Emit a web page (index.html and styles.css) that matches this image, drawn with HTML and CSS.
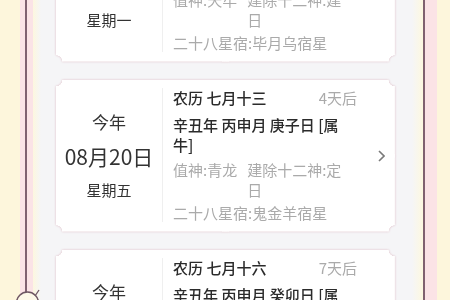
FILE: index.html
```html
<!DOCTYPE html>
<html lang="zh-CN">
<head>
<meta charset="utf-8">
<link rel="stylesheet" href="styles.css">
</head>
<body>
<div class="frame">
  <div class="rail">
    <div class="paper">
      <div class="list">
        <div class="card">
          <div class="side">
            <div class="year">今天</div>
            <div class="date">08月16日</div>
            <div class="week">星期一</div>
          </div>
          <div class="divider"></div>
          <div class="info">
            <div class="head"><span>农历 七月初九</span><span class="after">今天</span></div>
            <div class="gz">辛丑年 丙申月 丙申日 [属牛]</div>
            <div class="gods"><span>值神:天牢</span><span>建除十二神:建日</span></div>
            <div class="xiu">二十八星宿:毕月乌宿星</div>
          </div>
          <div class="arrow"><svg width="7" height="12" viewBox="0 0 7 12"><polyline points="1,1 6,6 1,11" fill="none" stroke="#7a7a7a" stroke-width="1.6"/></svg></div>
        </div>
        <div class="card">
          <div class="side">
            <div class="year">今年</div>
            <div class="date">08月20日</div>
            <div class="week">星期五</div>
          </div>
          <div class="divider"></div>
          <div class="info">
            <div class="head"><span>农历 七月十三</span><span class="after">4天后</span></div>
            <div class="gz">辛丑年 丙申月 庚子日 [属牛]</div>
            <div class="gods"><span>值神:青龙</span><span>建除十二神:定日</span></div>
            <div class="xiu">二十八星宿:鬼金羊宿星</div>
          </div>
          <div class="arrow"><svg width="7" height="12" viewBox="0 0 7 12"><polyline points="1,1 6,6 1,11" fill="none" stroke="#7a7a7a" stroke-width="1.6"/></svg></div>
        </div>
        <div class="card">
          <div class="side">
            <div class="year">今年</div>
            <div class="date">08月23日</div>
            <div class="week">星期一</div>
          </div>
          <div class="divider"></div>
          <div class="info">
            <div class="head"><span>农历 七月十六</span><span class="after">7天后</span></div>
            <div class="gz">辛丑年 丙申月 癸卯日 [属牛]</div>
            <div class="gods"><span>值神:玉堂</span><span>建除十二神:破日</span></div>
            <div class="xiu">二十八星宿:张月鹿宿星</div>
          </div>
          <div class="arrow"><svg width="7" height="12" viewBox="0 0 7 12"><polyline points="1,1 6,6 1,11" fill="none" stroke="#7a7a7a" stroke-width="1.6"/></svg></div>
        </div>
      </div>
    </div>
  </div>
</div>
<svg class="charm" width="34" height="20" viewBox="0 0 34 20">
  <circle cx="15.5" cy="15" r="11" fill="#fdf8e8" stroke="#6e5663" stroke-width="1.5"/>
  <line x1="23" y1="8" x2="27" y2="2" stroke="#6e5663" stroke-width="1.3"/>
</svg>
</body>
</html>
```
FILE: styles.css
```css
html, body {
  margin: 0;
  height: 100%;
  overflow: hidden;
}
body {
  background: #fdf6dc;
  font-family: "Noto Sans CJK SC", "Noto Sans", sans-serif;
  position: relative;
}
.frame {
  margin: 0 13px 0 20px;
  height: 100%;
  background: #fbe3e6;
  padding: 0 12px 0 5px;
  display: flex;
}
.rail {
  flex: 1;
  border-left: 2px solid #806170;
  border-right: 2px solid #806170;
  padding-left: 6px;
  display: flex;
}
.paper {
  flex: 1;
  background: linear-gradient(to right, #fdf7df, #f5f5f7 8px, #f5f5f7 calc(100% - 11px), #fdf8e0);
  padding: 0 28px 0 23px;
  overflow: hidden;
}
.list {
  margin-top: -90px;
}
.card {
  display: flex;
  height: 152px;
  margin-bottom: 18px;
  background:
    radial-gradient(circle at 0 0, transparent 6px, #fff 6.5px) top left / 51% 51% no-repeat,
    radial-gradient(circle at 100% 0, transparent 6px, #fff 6.5px) top right / 51% 51% no-repeat,
    radial-gradient(circle at 0 100%, transparent 6px, #fff 6.5px) bottom left / 51% 51% no-repeat,
    radial-gradient(circle at 100% 100%, transparent 6px, #fff 6.5px) bottom right / 51% 51% no-repeat;
  filter: drop-shadow(0 0 1px rgba(215, 170, 180, 0.75));
}
.side {
  width: 106px;
  display: flex;
  flex-direction: column;
  align-items: center;
  justify-content: center;
  gap: 11px;
  color: #333;
}
.year {
  font-size: 17px;
  line-height: 20px;
}
.date {
  font-size: 21px;
  line-height: 26px;
}
.week {
  font-size: 15px;
  line-height: 20px;
}
.divider {
  width: 1px;
  background: #efefef;
  margin: 8px 0 10px;
}
.info {
  width: 184px;
  padding: 8px 0 9px 10px;
  font-size: 15px;
  line-height: 20px;
}
.head {
  display: flex;
  justify-content: space-between;
  color: #2b2b2b;
  font-weight: 500;
}
.after {
  color: #aaa;
  font-weight: 400;
}
.gz {
  margin-top: 7px;
  color: #2b2b2b;
  font-weight: 500;
}
.gods {
  display: flex;
  gap: 10px;
  margin-top: 5px;
  padding-right: 8px;
  color: #aaa;
}
.gods span:last-child {
  flex: 1;
  min-width: 0;
}
.xiu {
  margin-top: 3px;
  color: #aaa;
}
.arrow {
  flex: 1;
  display: flex;
  align-items: center;
  justify-content: flex-end;
  padding-right: 10px;
}
.charm {
  position: absolute;
  left: 12px;
  top: 288px;
}
```
